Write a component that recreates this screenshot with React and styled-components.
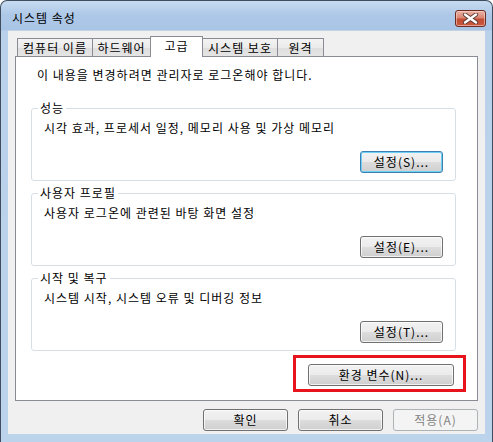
import React from "react";
import styled, { createGlobalStyle } from "styled-components";

const Global = createGlobalStyle`
  html, body { margin: 0; padding: 0; background: #ffffff; }
  body { font-family: "Noto Sans CJK KR", "Liberation Sans", sans-serif; font-size: 12px; color: #000; letter-spacing: 1px; }
  * { box-sizing: border-box; }
`;

const Window = styled.div`
  width: 493px;
  height: 442px;
  border: 1px solid #3f4d5e;
  border-bottom: none;
  border-radius: 7px 7px 0 0;
  background: linear-gradient(180deg, #c6dbf1 0px, #adc8e7 14px, #a9c5e6 29px, #b9d1ea 30px, #bcd3ec 100%);
  display: flex;
  flex-direction: column;
  overflow: hidden;
`;

const TitleBar = styled.div`
  height: 29px;
  display: flex;
  align-items: flex-start;
  justify-content: space-between;
  padding: 0 6px 0 11px;
`;

const Title = styled.span`
  margin-top: 10px;
  font-size: 12px;
  line-height: 14px;
  color: #000;
`;

const CloseButton = styled.div`
  margin-top: 9px;
  width: 31px;
  height: 17px;
  border: 1px solid #6b2c23;
  border-radius: 3px;
  background: linear-gradient(180deg, #eab2a5 0%, #d98672 45%, #c14d34 55%, #c9573d 100%);
  box-shadow: inset 0 0 0 1px rgba(255, 220, 210, 0.55);
  display: flex;
  align-items: center;
  justify-content: center;
`;

const Client = styled.div`
  flex: 1;
  margin: 0 7px 8px 7px;
  background: #f0f0f0;
  border: 1px solid #c3d2e3;
  border-width: 1px 0 0 0;
  display: flex;
  flex-direction: column;
  padding: 5px 7px 3px 7px;
`;

const TabStrip = styled.div`
  display: flex;
  align-items: flex-end;
  height: 21px;
  padding-left: 2px;
  position: relative;
  z-index: 1;
`;

const Tab = styled.div`
  width: ${(p) => p.$w}px;
  height: ${(p) => (p.$active ? 21 : 18)}px;
  margin-bottom: ${(p) => (p.$active ? 0 : 1)}px;
  border: 1px solid #898c95;
  border-bottom: none;
  background: ${(p) =>
    p.$active ? "#ffffff" : "linear-gradient(180deg, #f3f3f3 0%, #ebebeb 50%, #dedede 51%, #e5e5e5 100%)"};
  display: flex;
  align-items: center;
  justify-content: center;
  padding-bottom: ${(p) => (p.$active ? 3 : 0)}px;
  font-size: 12px;
  line-height: 14px;
  white-space: nowrap;
  & + & { margin-left: -1px; }
`;

const Panel = styled.div`
  flex: 1;
  margin-top: -1px;
  background: #ffffff;
  border: 1px solid #898c95;
  padding: 11px 21px 7px 15px;
  display: flex;
  flex-direction: column;
`;

const Info = styled.div`
  margin-left: 6px;
  line-height: 14px;
  white-space: nowrap;
`;

const Groups = styled.div`
  margin-top: 19px;
  display: flex;
  flex-direction: column;
  gap: 5px;
`;

const Group = styled.fieldset`
  margin: 0;
  min-width: 0;
  padding: 0 12px 7px 12px;
  border: 1px solid #d5dfe5;
  border-radius: 3px;
`;

const Legend = styled.legend`
  margin-left: -6px;
  padding: 0 2px;
  line-height: 14px;
  font-size: 12px;
`;

const Desc = styled.div`
  margin-top: 6px;
  line-height: 14px;
  white-space: nowrap;
`;

const ButtonRow = styled.div`
  display: flex;
  justify-content: flex-end;
  margin-top: ${(p) => p.$mt || 0}px;
`;

const Button = styled.button`
  width: ${(p) => p.$w}px;
  height: 22px;
  padding: 0;
  font-family: "Noto Sans CJK KR", "Liberation Sans", sans-serif;
  font-size: 12px;
  line-height: 14px;
  letter-spacing: 1px;
  color: ${(p) => (p.disabled ? "#838383" : "#000")};
  border-radius: 3px;
  border: 1px solid ${(p) => (p.disabled ? "#adb2b5" : p.$focus ? "#3c7fb1" : "#707070")};
  background: ${(p) =>
    p.disabled
      ? "#f4f4f4"
      : "linear-gradient(180deg, #f2f2f2 0%, #ebebeb 50%, #dddddd 51%, #cfcfcf 100%)"};
  box-shadow: ${(p) =>
    p.disabled
      ? "none"
      : p.$focus
      ? "inset 0 0 0 1px #6fd0f7"
      : "inset 0 0 0 1px rgba(255,255,255,0.7)"};
  cursor: default;
`;

const Highlight = styled.div`
  border: 3px solid #e8141b;
  padding: 6px 9px 3px 12px;
  margin-right: -10px;
`;

const HighlightRow = styled.div`
  display: flex;
  justify-content: flex-end;
  margin-top: 4px;
`;

const Footer = styled.div`
  display: flex;
  justify-content: flex-end;
  gap: 10px;
  margin-top: 8px;
`;

const groups = [
  { title: "성능", desc: "시각 효과, 프로세서 일정, 메모리 사용 및 가상 메모리", btn: "설정(S)...", focus: true },
  { title: "사용자 프로필", desc: "사용자 로그온에 관련된 바탕 화면 설정", btn: "설정(E)..." },
  { title: "시작 및 복구", desc: "시스템 시작, 시스템 오류 및 디버깅 정보", btn: "설정(T)..." },
];

const tabs = [
  { label: "컴퓨터 이름", w: 76 },
  { label: "하드웨어", w: 59 },
  { label: "고급", w: 53, active: true },
  { label: "시스템 보호", w: 76 },
  { label: "원격", w: 47 },
];

export default function App() {
  return (
    <>
      <Global />
      <Window>
        <TitleBar>
          <Title>시스템 속성</Title>
          <CloseButton>
            <svg width="17" height="11" viewBox="0 0 17 11">
              <path d="M3 1.5 L14 9.5 M14 1.5 L3 9.5" stroke="#5a3a36" strokeWidth="4.2" strokeLinecap="round" />
              <path d="M3 1.5 L14 9.5 M14 1.5 L3 9.5" stroke="#ffffff" strokeWidth="2.4" strokeLinecap="round" />
            </svg>
          </CloseButton>
        </TitleBar>
        <Client>
          <TabStrip>
            {tabs.map((t) => (
              <Tab key={t.label} $w={t.w} $active={t.active}>
                {t.label}
              </Tab>
            ))}
          </TabStrip>
          <Panel>
            <Info>이 내용을 변경하려면 관리자로 로그온해야 합니다.</Info>
            <Groups>
              {groups.map((g) => (
                <Group key={g.title}>
                  <Legend>{g.title}</Legend>
                  <Desc>{g.desc}</Desc>
                  <ButtonRow $mt={16}>
                    <Button $w={83} $focus={g.focus}>{g.btn}</Button>
                  </ButtonRow>
                </Group>
              ))}
            </Groups>
            <HighlightRow>
              <Highlight>
                <Button $w={146}>환경 변수(N)...</Button>
              </Highlight>
            </HighlightRow>
          </Panel>
          <Footer>
            <Button $w={85}>확인</Button>
            <Button $w={85}>취소</Button>
            <Button $w={85} disabled>적용(A)</Button>
          </Footer>
        </Client>
      </Window>
    </>
  );
}
